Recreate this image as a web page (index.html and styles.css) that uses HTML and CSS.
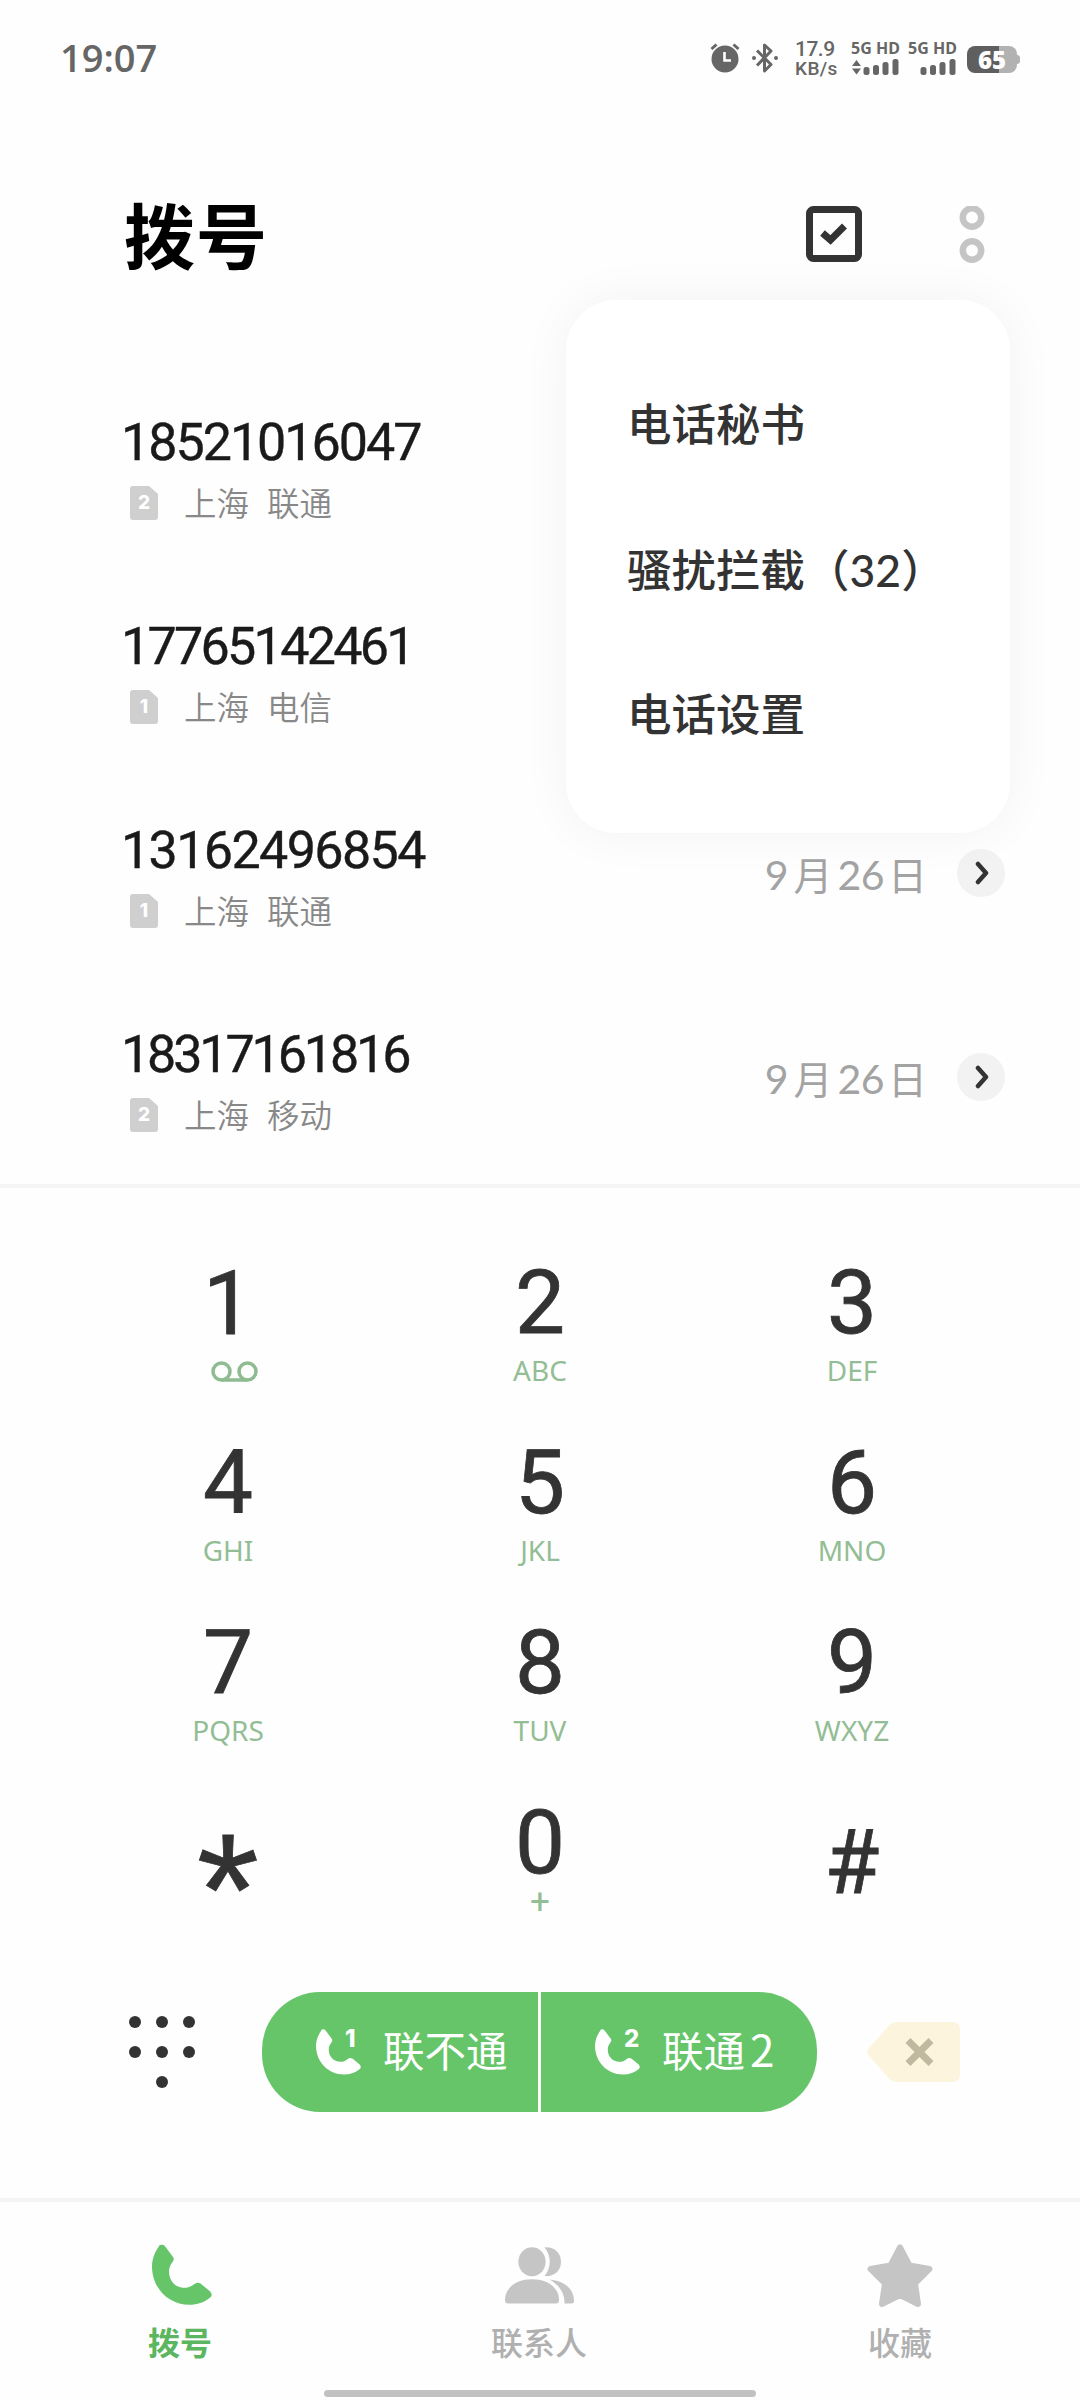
FILE: index.html
```html
<!DOCTYPE html>
<html lang="zh-CN">
<head>
    <meta charset="UTF-8">
    <meta name="viewport" content="width=device-width, initial-scale=1.0">
    <title>拨号</title>
    <link rel="stylesheet" href="styles.css">
</head>
<body>
    <svg class="defs" width="0" height="0">
        <symbol id="phone" viewBox="0 0 60 60.5">
            <path d="M6.5 2.5C7.8-.6 11-.6 13 1.8L21 12.5C22 14 22 15 21.2 16.5C19 19.5 17 22.5 17 27C17 36.5 23.5 43.3 32.4 43.3C36.5 43.3 39.3 41.8 42 39.8C44.5 37.8 46 37.8 48.5 39L57 46C60.5 48.8 60.5 51.5 57.5 53.5C52 58 45 60.3 37.5 60.3C16 60.3 0 43 0 22C0 14.5 3 7.5 6.5 2.5Z"/>
        </symbol>
        <symbol id="sim" viewBox="0 0 28 34">
            <path d="M3 0H19L28 8V31Q28 34 25 34H3Q0 34 0 31V3Q0 0 3 0Z"/>
        </symbol>
        <symbol id="chevron" viewBox="0 0 14 24">
            <path d="M3 3L11 12L3 21" fill="none" stroke="#333" stroke-width="4.5" stroke-linecap="round" stroke-linejoin="round"/>
        </symbol>
    </svg>

    <div class="status">
        <span class="time">19:07</span>
        <div class="status-icons">
            <svg class="alarm" width="30" height="30" viewBox="0 0 30 30">
                <circle cx="15" cy="16" r="13.5" fill="#666"/>
                <path d="M1.5 6L6.5 1.5M28.5 6L23.5 1.5" stroke="#666" stroke-width="3"/>
                <path d="M14.5 9V17.5H21" fill="none" stroke="#fff" stroke-width="2.6"/>
            </svg>
            <svg class="bluetooth" width="28" height="30" viewBox="0 0 28 30">
                <path d="M6 7.5L20 21.5L13.5 28V2L20 8L6 22.5" fill="none" stroke="#666" stroke-width="3" stroke-linejoin="round"/>
                <circle cx="3" cy="15" r="2" fill="#666"/>
                <circle cx="25" cy="15" r="2" fill="#666"/>
            </svg>
            <div class="speed"><b>17.9</b><span>KB/s</span></div>
            <div class="signal">
                <span>5G HD</span>
                <svg width="48" height="18" viewBox="0 0 48 18" fill="#666">
                    <path d="M1 8L5.5 2L10 8ZM1 10.5L5.5 16.5L10 10.5Z"/>
                    <rect x="12.5" y="9" width="6" height="8" rx="2.5"/>
                    <rect x="22" y="7" width="6" height="10" rx="2.5"/>
                    <rect x="31.5" y="4" width="6" height="13" rx="2.5"/>
                    <rect x="41.5" y="1" width="6" height="16" rx="2.5"/>
                </svg>
            </div>
            <div class="signal">
                <span>5G HD</span>
                <svg width="48" height="18" viewBox="0 0 48 18" fill="#666">
                    <rect x="12.5" y="9" width="6" height="8" rx="2.5"/>
                    <rect x="22" y="7" width="6" height="10" rx="2.5"/>
                    <rect x="31.5" y="4" width="6" height="13" rx="2.5"/>
                    <rect x="41.5" y="1" width="6" height="16" rx="2.5"/>
                </svg>
            </div>
            <div class="battery">65</div>
        </div>
    </div>

    <header>
        <h1>拨号</h1>
        <svg class="check" width="56" height="56" viewBox="0 0 56 56" fill="none" stroke="#333">
            <rect x="3.5" y="3.5" width="49" height="49" rx="4" stroke-width="7"/>
            <path d="M16.5 27L24.5 34L38.5 20" stroke-width="7"/>
        </svg>
        <svg class="more" width="26" height="60" viewBox="0 0 26 60" fill="none" stroke="#c5c5c5" stroke-width="6.5">
            <circle cx="13" cy="11.5" r="9.2"/>
            <circle cx="13" cy="44.5" r="9.2"/>
        </svg>
        <div class="menu">
            <div>电话秘书</div>
            <div>骚扰拦截（<i>32</i>）</div>
            <div>电话设置</div>
        </div>
    </header>

    <div class="calls">
        <div class="call">
            <div class="info">
                <div class="number n1">18521016047</div>
                <div class="place"><span class="sim"><svg><use href="#sim"/></svg><b>2</b></span><span>上海</span><span>联通</span></div>
            </div>
        </div>
        <div class="call">
            <div class="info">
                <div class="number n2">17765142461</div>
                <div class="place"><span class="sim"><svg><use href="#sim"/></svg><b>1</b></span><span>上海</span><span>电信</span></div>
            </div>
        </div>
        <div class="call">
            <div class="info">
                <div class="number n3">13162496854</div>
                <div class="place"><span class="sim"><svg><use href="#sim"/></svg><b>1</b></span><span>上海</span><span>联通</span></div>
            </div>
            <div class="date"><i>9</i>月<i class="day">26</i>日</div>
            <div class="go"><svg width="14" height="24"><use href="#chevron"/></svg></div>
        </div>
        <div class="call">
            <div class="info">
                <div class="number n4">18317161816</div>
                <div class="place"><span class="sim"><svg><use href="#sim"/></svg><b>2</b></span><span>上海</span><span>移动</span></div>
            </div>
            <div class="date"><i>9</i>月<i class="day">26</i>日</div>
            <div class="go"><svg width="14" height="24"><use href="#chevron"/></svg></div>
        </div>
    </div>

    <div class="dialer">
        <div class="keys">
            <div class="key"><b class="one">1</b>
                <svg class="voicemail" width="47" height="21" viewBox="0 0 47 21" fill="none" stroke="#8fbb90" stroke-width="3.5">
                    <circle cx="10.5" cy="10.5" r="8.5"/>
                    <circle cx="36.5" cy="10.5" r="8.5"/>
                    <path d="M10.5 19H36.5"/>
                </svg>
            </div>
            <div class="key"><b>2</b><span>ABC</span></div>
            <div class="key"><b>3</b><span>DEF</span></div>
            <div class="key"><b>4</b><span>GHI</span></div>
            <div class="key"><b>5</b><span>JKL</span></div>
            <div class="key"><b>6</b><span>MNO</span></div>
            <div class="key"><b>7</b><span>PQRS</span></div>
            <div class="key"><b>8</b><span>TUV</span></div>
            <div class="key"><b>9</b><span>WXYZ</span></div>
            <div class="key"><b class="star">*</b></div>
            <div class="key"><b>0</b><span class="plus">+</span></div>
            <div class="key"><b class="hash">#</b></div>
        </div>
        <div class="actions">
            <svg class="dots" width="66" height="72" viewBox="0 0 66 72" fill="#333">
                <circle cx="6" cy="6" r="6"/><circle cx="33" cy="6" r="6"/><circle cx="60" cy="6" r="6"/>
                <circle cx="6" cy="36" r="6"/><circle cx="33" cy="36" r="6"/><circle cx="60" cy="36" r="6"/>
                <circle cx="33" cy="66" r="6"/>
            </svg>
            <div class="dial left">
                <span class="dial-icon"><svg><use href="#phone"/></svg><b>1</b></span>
                <span class="sim-name">联不通</span>
            </div>
            <div class="dial right">
                <span class="dial-icon"><svg><use href="#phone"/></svg><b>2</b></span>
                <span class="sim-name">联通</span><span class="two">2</span>
            </div>
            <svg class="delete" width="93" height="60" viewBox="0 0 93 60">
                <path d="M30 0H85Q93 0 93 8V52Q93 60 85 60H30Q25 60 21.5 56L3 35Q-2 30 3 25L21.5 4Q25 0 30 0Z" fill="#fdf4de"/>
                <path d="M41 18.5L64 41.5M64 18.5L41 41.5" stroke="#c0b89f" stroke-width="7"/>
            </svg>
        </div>
    </div>

    <nav>
        <div class="tab active">
            <svg width="60" height="64" viewBox="0 0 60 64"><use href="#phone" y="1.5" width="60" height="60.5"/></svg>
            <span>拨号</span>
        </div>
        <div class="tab contacts">
            <svg width="69" height="64" viewBox="0 0 69 64">
                <ellipse cx="27" cy="18.7" rx="13.6" ry="14.5"/>
                <path d="M0 57C0 45 11 36.3 27 36.3C43 36.3 54 45 54 57Q54 60.5 51 60.5H3Q0 60.5 0 57Z"/>
                <path d="M39.5 4.3C49 3.5 56 9.5 56 18.7C56 28 49 34 39.5 33C46.5 24.5 46.5 13 39.5 4.3Z"/>
                <path d="M44.5 36.5C60 38 69 46.5 69 58Q69 60.5 66.5 60.5H59.5C60 50 54 42 44.5 36.5Z"/>
            </svg>
            <span>联系人</span>
        </div>
        <div class="tab">
            <svg width="66" height="64" viewBox="0 0 66 64">
                <path d="M33 4.5L42.5 22.5L62.5 26L48 40.5L51 61L33 52L15 61L18 40.5L3.5 26L23.5 22.5Z" stroke="#c5c5c5" stroke-width="6" stroke-linejoin="round"/>
            </svg>
            <span>收藏</span>
        </div>
        <div class="home-bar"></div>
    </nav>
</body>
</html>
```

FILE: styles.css
```css
* {
    box-sizing: border-box;
}
body {
    margin: 0;
    width: 1080px;
    height: 2400px;
    overflow: hidden;
    background: #fefefe;
    font-family: Roboto, "Noto Sans CJK SC", sans-serif;
    color: #333;
}
svg {
    display: block;
    flex: none;
}
.defs {
    position: absolute;
}
.status {
    display: flex;
    justify-content: space-between;
    align-items: center;
    height: 116px;
    padding: 0 60px;
    color: #666;
}
.time {
    font-family: "Open Sans", sans-serif;
    font-size: 38px;
    font-weight: 600;
    line-height: 50px;
    margin-top: -2px;
}
.status-icons {
    display: flex;
    align-items: center;
    height: 40px;
}
.bluetooth {
    margin-left: 11px;
}
.speed {
    display: flex;
    flex-direction: column;
    gap: 1px;
    width: 42px;
    margin-left: 16px;
    font: 500 19px/18px Roboto, sans-serif;
    letter-spacing: 0.4px;
}
.speed b {
    font-size: 21px;
    font-weight: 500;
    line-height: 20px;
    letter-spacing: -0.5px;
}
.signal {
    width: 48px;
    margin-left: 14px;
    font: 700 16px/19px "Noto Sans", sans-serif;
    white-space: nowrap;
}
.signal + .signal {
    margin-left: 9px;
}
.signal span {
    display: block;
    margin-top: -2px;
}
.battery {
    position: relative;
    width: 50px;
    height: 27px;
    margin: 2px 3px 0 11px;
    border-radius: 8px;
    background: linear-gradient(to right, #5f5f5f 64%, #b2b2b2 64%);
    font: 800 24px/28px "Open Sans", sans-serif;
    text-align: center;
    color: #fff;
}
.battery::after {
    content: "";
    position: absolute;
    right: -3px;
    top: 9px;
    width: 3px;
    height: 9px;
    border-radius: 0 3px 3px 0;
    background: #b2b2b2;
}
header {
    position: relative;
    display: flex;
    align-items: center;
    height: 240px;
    padding: 0 95px 0 124px;
}
h1 {
    flex: 1;
    margin: -8px 0 0;
    font-family: "Noto Sans CJK SC", sans-serif;
    font-size: 71px;
    font-weight: 700;
    line-height: 80px;
    letter-spacing: 1px;
    color: #000;
}
.check {
    margin-right: 97px;
    margin-top: -4px;
}
.menu {
    position: absolute;
    z-index: 1;
    left: 566px;
    top: 184px;
    width: 444px;
    height: 533px;
    padding: 54px 61px;
    border-radius: 50px;
    background: #fff;
    box-shadow: 0 0 50px rgba(0, 0, 0, 0.05);
    font-size: 44.5px;
    font-weight: 500;
    line-height: 144px;
    white-space: nowrap;
}
.menu i {
    font-family: Lato, sans-serif;
    font-style: normal;
}
.calls {
    height: 828px;
    padding-top: 12px;
}
.call {
    display: flex;
    height: 204px;
    padding: 43px 75px 0 121px;
}
.info {
    flex: 1;
}
.number {
    font-size: 52px;
    line-height: 63px;
    font-weight: 400;
    color: #1a1a1a;
    -webkit-text-stroke: 0.4px #1a1a1a;
}
.n1 {
    letter-spacing: -2px;
}
.n2 {
    letter-spacing: -2.7px;
}
.n3 {
    letter-spacing: -1.6px;
}
.n4 {
    letter-spacing: -3.1px;
}
.place {
    display: flex;
    align-items: center;
    gap: 18px;
    height: 40px;
    margin-top: 9px;
    padding-left: 9px;
    font-family: "Noto Sans CJK SC", sans-serif;
    font-size: 32.5px;
    font-weight: 350;
    line-height: 38px;
    color: #888;
}
.place > span {
    margin-top: -2px;
}
.place .sim {
    position: relative;
    width: 28px;
    height: 34px;
    margin: 0 8px 0 0;
}
.sim svg {
    width: 28px;
    height: 34px;
    fill: #cfcfcf;
}
.sim b {
    position: absolute;
    inset: 0;
    font-family: Inter, sans-serif;
    font-size: 19px;
    font-weight: 800;
    line-height: 34px;
    text-align: center;
    color: #fff;
}
.date {
    display: flex;
    height: 48px;
    margin-top: 32px;
    font-family: "Noto Sans CJK SC", sans-serif;
    font-size: 39px;
    font-weight: 400;
    line-height: 45px;
    color: #a3a3a3;
}
.date i {
    margin-right: 5px;
    font-family: Lato, sans-serif;
    font-size: 41px;
    font-style: normal;
    line-height: 48px;
}
.date .day {
    margin-left: 5px;
    margin-right: 4px;
    letter-spacing: -0.5px;
}
.go {
    display: flex;
    align-items: center;
    justify-content: center;
    width: 48px;
    height: 48px;
    margin-top: 30px;
    margin-left: 30px;
    padding-left: 2px;
    border-radius: 50%;
    background: #f2f2f2;
}
.dialer {
    height: 1014px;
    padding-top: 23px;
    border-top: 4px solid #f5f5f5;
}
.keys {
    display: grid;
    grid-template-columns: repeat(3, 312px);
    grid-auto-rows: 180px;
    margin-left: 72px;
}
.key {
    display: flex;
    flex-direction: column;
    align-items: center;
    padding-top: 50px;
}
.key b {
    font-size: 89px;
    font-weight: 400;
    line-height: 84px;
    -webkit-text-stroke: 0.8px #333;
}
.key span {
    margin-top: 8px;
    font: 28px/34px "Noto Sans", sans-serif;
    color: #93bd94;
}
.key .one {
    margin-top: 1px;
}
.voicemail {
    margin-top: 15px;
    margin-left: 13px;
}
.key .plus {
    margin-top: 4px;
    font: 400 35px/26px Roboto, sans-serif;
}
.key .star {
    height: 96px;
    font-family: "Liberation Sans", sans-serif;
    font-size: 160px;
    line-height: 178px;
}
.key .hash {
    margin-top: 20px;
}
.actions {
    display: flex;
    align-items: center;
    height: 120px;
    margin-top: 61px;
    padding-left: 129px;
}
.dial {
    display: flex;
    align-items: center;
    width: 276px;
    height: 120px;
    padding-left: 54px;
    background: #66c569;
    color: #fff;
    font-family: "Noto Sans CJK SC", sans-serif;
    font-size: 41.5px;
}
.left {
    margin-left: 67px;
    border-radius: 58px 0 0 58px;
}
.right {
    margin-left: 3px;
    border-radius: 0 58px 58px 0;
}
.sim-name {
    margin-top: -7px;
}
.two {
    margin-top: -8px;
    margin-left: 5px;
    font-size: 44px;
}
.dial-icon {
    position: relative;
    width: 45px;
    height: 46px;
    margin-right: 22px;
}
.dial-icon svg {
    width: 45px;
    height: 46px;
    fill: #fff;
}
.dial-icon b {
    position: absolute;
    left: 29px;
    top: -3px;
    font-family: Inter, sans-serif;
    font-size: 24px;
    font-weight: 800;
    line-height: 26px;
}
.delete {
    margin-left: 50px;
}
nav {
    position: relative;
    display: grid;
    grid-template-columns: repeat(3, 1fr);
    height: 202px;
    padding-top: 41px;
    border-top: 4px solid #f5f5f5;
}
.tab {
    display: flex;
    flex-direction: column;
    align-items: center;
    font-family: "Noto Sans CJK SC", sans-serif;
    font-size: 32px;
    font-weight: 500;
    line-height: 40px;
    color: #b0b0b0;
}
.tab svg {
    margin-bottom: 14px;
    fill: #c5c5c5;
}
.contacts {
    padding-right: 2px;
}
.active {
    font-weight: 700;
    color: #5cb65f;
}
.active svg {
    margin-left: 4px;
    fill: #66c569;
}
.home-bar {
    position: absolute;
    left: 324px;
    bottom: 3px;
    width: 432px;
    height: 7px;
    border-radius: 4px;
    background: #c1c1c1;
}
```
